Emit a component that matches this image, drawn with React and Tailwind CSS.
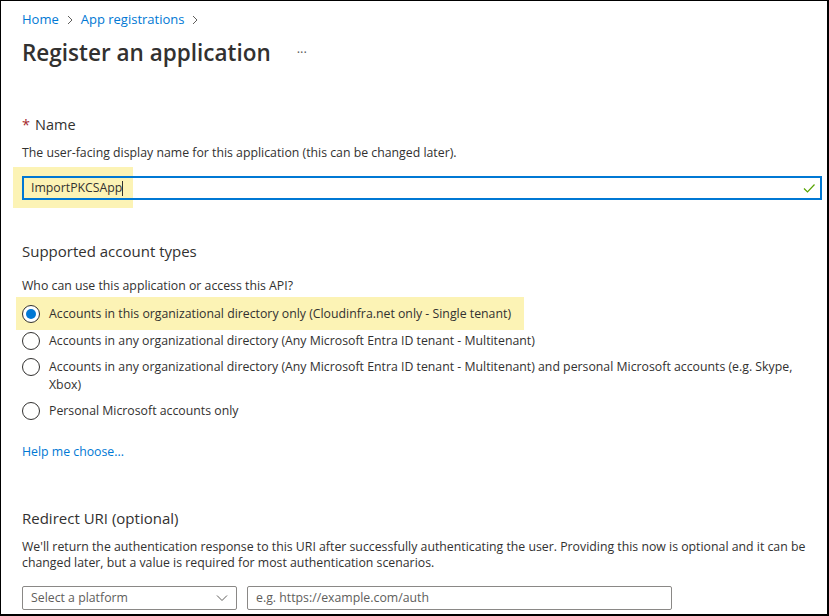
import { useState } from 'react'

const font = { fontFamily: '"Segoe UI", "Open Sans", "Liberation Sans", sans-serif' }

function Chevron() {
    return (
        <svg width="6" height="10" viewBox="0 0 6 10" fill="none">
            <path d="M1 1 L5 5 L1 9" stroke="#605e5c" strokeWidth="1" />
        </svg>
    )
}

function Radio({ checked, label, onClick }) {
    return (
        <label className="flex items-start gap-[9px] cursor-pointer" onClick={onClick}>
            <span className="w-[18px] h-[18px] shrink-0 rounded-full border border-[#323130] flex items-center justify-center bg-white">
                {checked && <span className="w-[10px] h-[10px] rounded-full bg-[#0078d4]"></span>}
            </span>
            <span className="leading-[18px]">{label}</span>
        </label>
    )
}

export default function App() {
    const [choice, setChoice] = useState(0)
    const options = [
        "Accounts in this organizational directory only (Cloudinfra.net only - Single tenant)",
        "Accounts in any organizational directory (Any Microsoft Entra ID tenant - Multitenant)",
        "Accounts in any organizational directory (Any Microsoft Entra ID tenant - Multitenant) and personal Microsoft accounts (e.g. Skype, Xbox)",
        "Personal Microsoft accounts only",
    ]

    return (
        <div style={font} className="w-[829px] h-[616px] bg-white border-t border-l border-b-2 border-r-2 border-black text-[#323130] text-[12.3px] overflow-hidden">
            <div className="pl-[21px] pr-[5px]">
                {/* breadcrumb */}
                <div className="flex items-center gap-[8px] text-[#0078d4] text-[13px] pt-[9px] h-[29px]">
                    <span>Home</span>
                    <Chevron />
                    <span>App registrations</span>
                    <Chevron />
                </div>
                <div className="flex items-center h-[46px]">
                    <h1 className="text-[22.5px] font-semibold">Register an application</h1>
                    <span className="ml-[26px] text-[#605e5c] text-[13px]">···</span>
                </div>

                <div className="mt-[39px] text-[14.5px] flex items-center gap-[5px] h-[20px]">
                    <span className="text-[#a4262c]">*</span>
                    <span>Name</span>
                </div>
                <p className="mt-[9px] leading-[18px]">The user-facing display name for this application (this can be changed later).</p>

                <div className="relative mt-[14px]">
                    <div className="absolute left-[-9px] top-[-9px] w-[120px] h-[41px] bg-[#fcf3b5]"></div>
                    <div className="relative flex items-center h-[24px] border-2 border-[#0078d4] w-[800px]">
                        <span className="pl-[7px]">ImportPKCSApp</span>
                        <span className="w-[1px] h-[15px] bg-[#323130]"></span>
                        <svg className="ml-auto mr-[4px]" width="14" height="14" viewBox="0 0 14 14" fill="none">
                            <path d="M2 7.5 L5.5 11 L12.5 3.5" stroke="#57a300" strokeWidth="1.2" />
                        </svg>
                    </div>
                </div>

                <h2 className="mt-[40px] text-[15px] leading-[22px] h-[22px]">Supported account types</h2>
                <p className="mt-[15px] leading-[18px]">Who can use this application or access this API?</p>

                <div className="mt-[10px] flex flex-col">
                    <div className="relative">
                        <div className="absolute left-[-6px] top-[-8px] w-[508px] h-[33px] bg-[#fcf3b5]"></div>
                        <div className="relative">
                            <Radio checked={choice === 0} label={options[0]} onClick={() => setChoice(0)} />
                        </div>
                    </div>
                    <div className="mt-[9px]">
                        <Radio checked={choice === 1} label={options[1]} onClick={() => setChoice(1)} />
                    </div>
                    <div className="mt-[8px]">
                        <Radio checked={choice === 2} label={options[2]} onClick={() => setChoice(2)} />
                    </div>
                    <div className="mt-[8px]">
                        <Radio checked={choice === 3} label={options[3]} onClick={() => setChoice(3)} />
                    </div>
                </div>

                <div className="mt-[23px] text-[#0078d4] leading-[18px]">Help me choose...</div>

                <h2 className="mt-[46px] text-[15px] leading-[22px] h-[22px]">Redirect URI (optional)</h2>
                <p className="mt-[10px] leading-[16px]">We'll return the authentication response to this URI after successfully authenticating the user. Providing this now is optional and it can be changed later, but a value is required for most authentication scenarios.</p>

                <div className="mt-[15px] flex gap-[10px]">
                    <div className="w-[215px] h-[24px] border border-[#8a8886] rounded-[2px] flex items-center justify-between pl-[8px] pr-[8px] text-[#605e5c]">
                        <span>Select a platform</span>
                        <svg width="12" height="8" viewBox="0 0 12 8" fill="none">
                            <path d="M1 1.5 L6 6.5 L11 1.5" stroke="#605e5c" strokeWidth="1" />
                        </svg>
                    </div>
                    <div className="w-[425px] h-[24px] border border-[#8a8886] rounded-[2px] flex items-center px-[8px] text-[#605e5c]">
                        <span>e.g. https://example.com/auth</span>
                    </div>
                </div>
            </div>
        </div>
    )
}
